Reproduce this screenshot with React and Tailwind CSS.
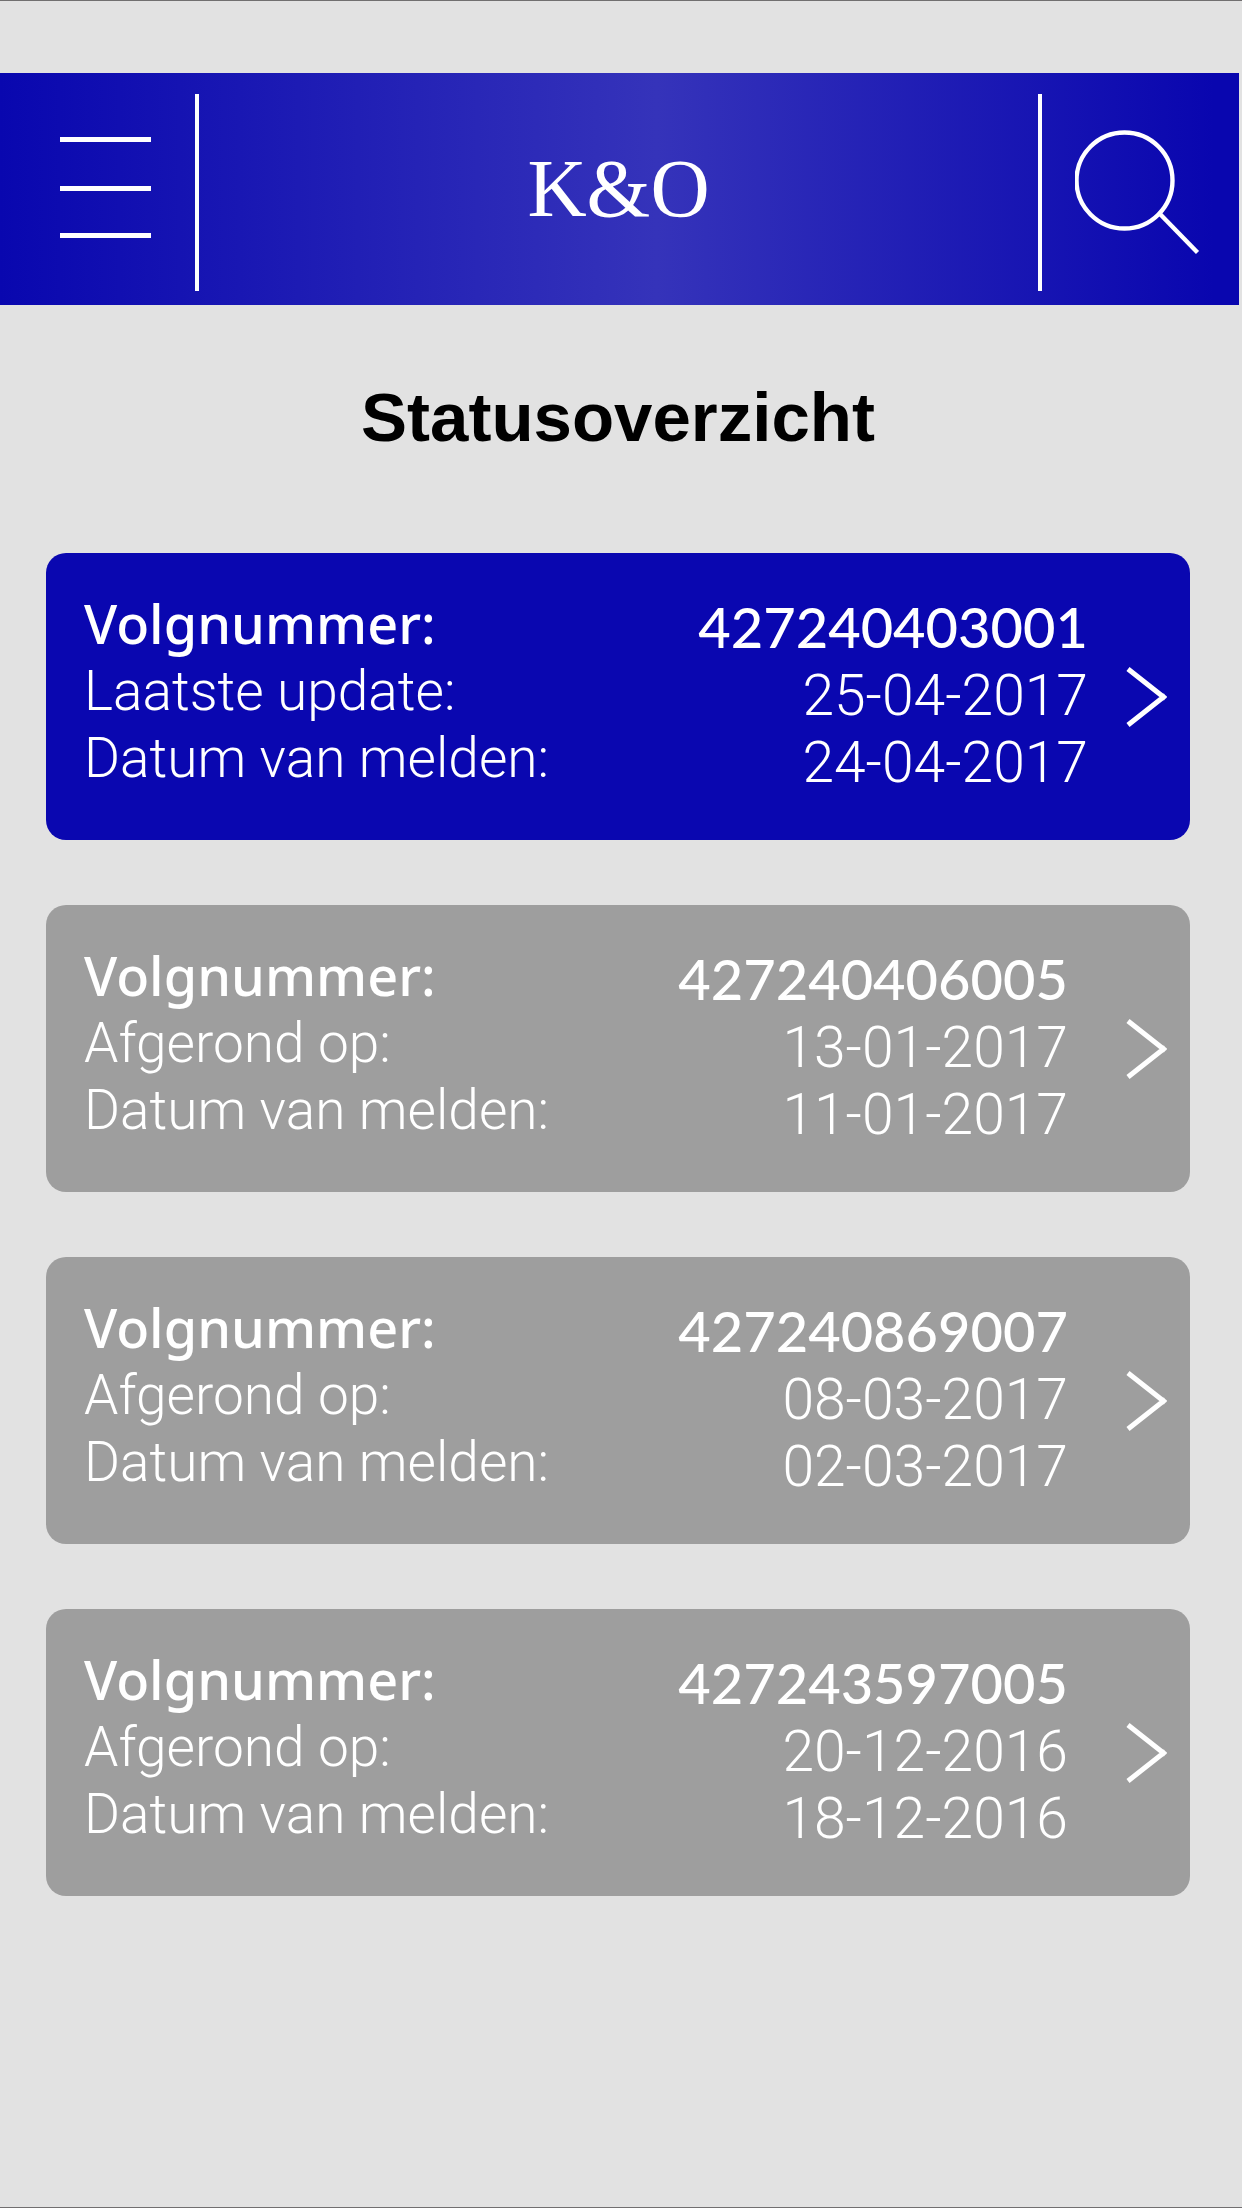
const reports = [
  { number: "427240403001", statusLabel: "Laatste update:", status: "25-04-2017", reported: "24-04-2017", active: true },
  { number: "427240406005", statusLabel: "Afgerond op:", status: "13-01-2017", reported: "11-01-2017" },
  { number: "427240869007", statusLabel: "Afgerond op:", status: "08-03-2017", reported: "02-03-2017" },
  { number: "427243597005", statusLabel: "Afgerond op:", status: "20-12-2016", reported: "18-12-2016" },
];

function MenuIcon() {
  return (
    <svg className="h-[104px] w-[91px]" viewBox="0 0 91 104" fill="currentColor" aria-hidden="true">
      <rect y="0" width="91" height="5" />
      <rect y="49" width="91" height="5" />
      <rect y="96" width="91" height="5" />
    </svg>
  );
}

function SearchIcon() {
  return (
    <svg className="size-[132px]" viewBox="0 0 132 132" fill="none" stroke="currentColor" strokeWidth="4.4" aria-hidden="true">
      <circle cx="49.5" cy="57.5" r="48" />
      <path d="M85 91l37.5 38.5" />
    </svg>
  );
}

function Chevron() {
  return (
    <svg className="h-[60px] w-[42px] shrink-0" viewBox="0 0 42 60" fill="none" stroke="currentColor" strokeWidth="5" aria-hidden="true">
      <path d="M2 2L37.5 30M2 58L37.5 30M36 28.8L39.5 31.5M36 31.2L39.5 28.5" />
    </svg>
  );
}

function ReportCard({ report }) {
  return (
    <a
      href="#"
      className={`flex h-[287px] items-center rounded-[20px] pl-[38px] pr-[22px] text-white ${
        report.active ? "gap-[38px] bg-[#0a07b0]" : "gap-[58px] bg-[#9e9e9e]"
      }`}
    >
      <div className="flex flex-1 justify-between self-start whitespace-nowrap pt-[35px]">
        <div className="font-['Roboto',sans-serif] text-[55px] font-light leading-[67px]">
          <p className="font-['Noto_Sans',sans-serif] text-[54px] font-medium leading-[70px]">Volgnummer:</p>
          <p>{report.statusLabel}</p>
          <p>Datum van melden:</p>
        </div>
        <div className="pt-1 text-right font-['Roboto',sans-serif] text-[57px] font-light leading-[67px]">
          <p className="font-['Lato',sans-serif] text-[56px] font-medium leading-[70px]">{report.number}</p>
          <p>{report.status}</p>
          <p>{report.reported}</p>
        </div>
      </div>
      <Chevron />
    </a>
  );
}

export default function App() {
  return (
    <div className="min-h-screen border-y border-[#716f70] bg-[#e2e2e2] pt-[72px]">
      <header className="mr-[3px] flex h-[232px] items-center bg-[linear-gradient(90deg,#0907af_0%,#3533ba_53%,#0906af_98%)] text-white">
        <button type="button" aria-label="Menu" className="w-[195px] pl-[60px]">
          <MenuIcon />
        </button>
        <div className="mb-[14px] mt-[21px] w-1 self-stretch bg-white" />
        <p className="flex-1 text-center font-['Liberation_Serif',serif] text-[82px] leading-[100px]">K&amp;O</p>
        <div className="mb-[14px] mt-[21px] w-1 self-stretch bg-white" />
        <button type="button" aria-label="Zoeken" className="flex w-[197px] justify-center">
          <SearchIcon />
        </button>
      </header>
      <main className="pb-16 pl-[46px] pr-[52px] pt-[73px]">
        <h1 className="text-center font-['Liberation_Sans',sans-serif] text-[69px] font-bold leading-[80px] text-black">
          Statusoverzicht
        </h1>
        <div className="mt-[95px] flex flex-col gap-[65px]">
          {reports.map((r) => (
            <ReportCard key={r.number} report={r} />
          ))}
        </div>
      </main>
    </div>
  );
}
